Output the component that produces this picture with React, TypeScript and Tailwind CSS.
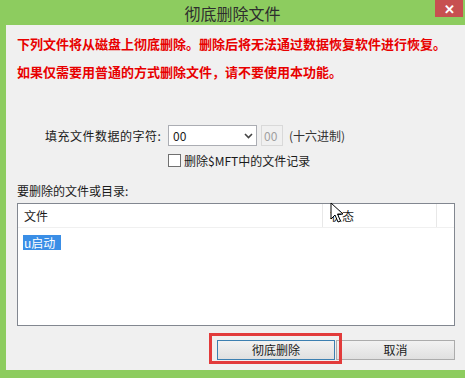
import React from "react";

const font = { fontFamily: '"Noto Sans CJK SC", "Noto Sans", sans-serif' };

const Cursor = () => (
  <svg width="14" height="22" viewBox="0 0 14 22" className="absolute left-[7px] top-[-2px]">
    <path d="M1 1 L1 17 L5 13 L8 20 L10.5 19 L7.5 12 L13 12 Z" fill="#fff" stroke="#000" strokeWidth="1" strokeLinejoin="miter" />
  </svg>
);

const ListBox = () => (
  <div className="mt-[4px] h-[123px] border border-[#828790] bg-white flex flex-col">
    <div className="h-[24px] flex text-[12px] text-[#1a1a1a] bg-white border-b border-[#f0f0f0]">
      <div className="w-[305px] pl-[6px] flex items-center border-r border-[#e8e8e8]">文件</div>
      <div className="relative w-[114px] pl-[7px] flex items-center border-r border-[#e8e8e8]">
        状态
        <Cursor />
      </div>
      <div className="flex-1" />
    </div>
    <div className="pt-[1px] pl-[5px]">
      <span className="inline-block h-[15px] leading-[15px] px-[1px] w-[38px] bg-[#3a8ee6] text-white text-[12px]">u启动</span>
    </div>
  </div>
);

export default function App() {
  return (
    <div className="w-[465px] h-[378px] bg-[#8dcc5f] flex flex-col overflow-hidden" style={font}>
      <div className="h-[25px] flex items-center justify-center relative shrink-0">
        <span className="text-[16px] text-[#2e2e2e] leading-none">彻底删除文件</span>
        <button className="absolute right-[2px] top-0 w-[28px] h-[17px] bg-[#c75050] text-white text-[13px] font-bold leading-none flex items-center justify-center">
          ✕
        </button>
      </div>

      <div className="flex-1 ml-[6px] mb-[8px] bg-[#f0f0f0] pl-[11px] pr-[10px] pt-[9px] flex flex-col">
        <div className="text-[#e80000] text-[13px] font-bold leading-[20px] whitespace-nowrap">
          下列文件将从磁盘上彻底删除。删除后将无法通过数据恢复软件进行恢复。
        </div>
        <div className="mt-[8px] text-[#e80000] text-[13px] font-bold leading-[20px] whitespace-nowrap">
          如果仅需要用普通的方式删除文件，请不要使用本功能。
        </div>

        <div className="mt-[43px] flex items-center h-[21px] text-[12px] text-[#1a1a1a]">
          <span className="ml-[28px] w-[123px] tracking-[0.5px]">填充文件数据的字符:</span>
          <div className="w-[89px] h-[21px] border border-[#abadb3] bg-white flex items-center justify-between pl-[4px] pr-[3px]">
            <span>00</span>
            <svg width="9" height="6" viewBox="0 0 9 6">
              <path d="M1 1 L4.5 4.5 L8 1" fill="none" stroke="#444" strokeWidth="1.6" />
            </svg>
          </div>
          <div className="ml-[4px] w-[22px] h-[21px] border border-[#d9d9d9] bg-[#f0f0f0] text-[#a0a0a0] flex items-center pl-[2px]">00</div>
          <span className="ml-[6px] text-[#333]">(十六进制)</span>
        </div>

        <div className="mt-[7px] ml-[151px] flex items-center h-[15px] text-[12px] text-[#1a1a1a]">
          <span className="w-[13px] h-[13px] border border-[#707070] bg-white" />
          <span className="ml-[3px]">删除$MFT中的文件记录</span>
        </div>

        <div className="mt-[15px] text-[12px] leading-[16px] text-[#1a1a1a]">要删除的文件或目录:</div>

        <ListBox />

        <div className="mt-[14px] flex justify-end text-[12px] text-[#1a1a1a]">
          <div className="relative">
            <button className="w-[118px] h-[20px] border border-[#3c7fb1] bg-gradient-to-b from-[#f2f2f2] to-[#e0e0e0] leading-[18px]">
              彻底删除
            </button>
            <span className="absolute left-[-8px] right-[-7px] top-[-7px] bottom-[-4px] border-[3px] border-[#e23b3b] pointer-events-none" />
          </div>
          <button className="ml-[1px] w-[119px] h-[20px] border border-[#acacac] bg-gradient-to-b from-[#f2f2f2] to-[#e0e0e0] leading-[18px]">
            取消
          </button>
        </div>
      </div>
    </div>
  );
}
